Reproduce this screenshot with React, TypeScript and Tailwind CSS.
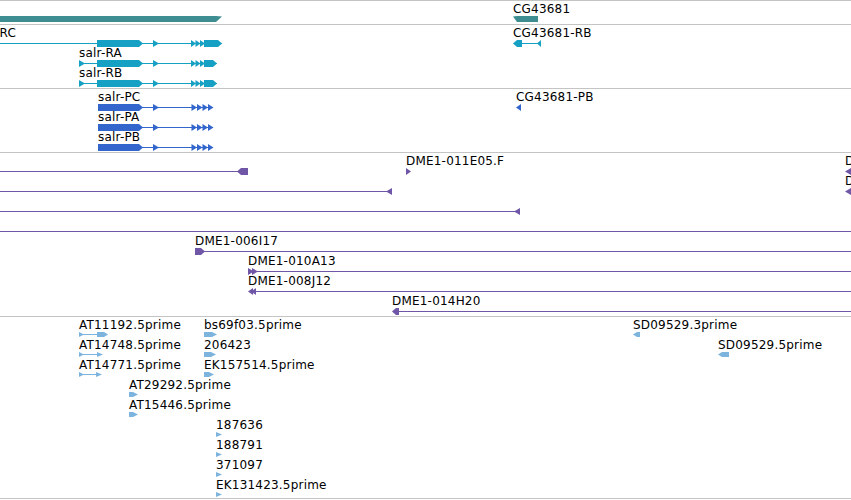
import type { ReactNode } from "react";

type Label = { x: number; y: number; text: string };

// glyph helpers, all in page coordinates (the svg viewBox is offset per track)
const line = (x1: number, x2: number, y: number) => (
  <rect x={x1} y={y} width={x2 - x1} height={1} />
);

const blockR = (x1: number, x2: number, y: number, up = 3, down = 4, tip = 4) => (
  <polygon
    points={`${x1},${y - up} ${x2 - tip},${y - up} ${x2},${y + 0.5} ${x2 - tip},${y + down} ${x1},${y + down}`}
  />
);

const blockL = (x1: number, x2: number, y: number, up = 3, down = 4, tip = 4) => (
  <polygon
    points={`${x1},${y + 0.5} ${x1 + tip},${y - up} ${x2},${y - up} ${x2},${y + down} ${x1 + tip},${y + down}`}
  />
);

const triR = (x1: number, x2: number, y: number, up = 3, down = 4) => (
  <polygon points={`${x1},${y - up} ${x2},${y + 0.5} ${x1},${y + down}`} />
);

const triL = (x1: number, x2: number, y: number, up = 3, down = 4) => (
  <polygon points={`${x2},${y - up} ${x1},${y + 0.5} ${x2},${y + down}`} />
);

const Separator = () => <div className="h-px w-full bg-[#c4c4c4]" />;

function Track({
  top,
  height,
  color,
  className,
  labels,
  children,
}: {
  top: number;
  height: number;
  color: string;
  className: string;
  labels: Label[];
  children: ReactNode;
}) {
  return (
    <div className={`relative w-full overflow-hidden ${className}`}>
      <svg
        className="absolute inset-0"
        width={851}
        height={height}
        viewBox={`0 ${top} 851 ${height}`}
        fill={color}
      >
        {children}
      </svg>
      {labels.map((l, i) => (
        <span
          key={i}
          className="absolute whitespace-nowrap text-[12px] leading-none tracking-[0.2px] text-black"
          style={{ left: l.x, top: l.y - top }}
        >
          {l.text}
        </span>
      ))}
    </div>
  );
}

// salr transcript model, cyan track
const transcript = (y: number, withFlag: boolean, end: number) => (
  <g>
    {line(withFlag ? 79 : 0, end, y)}
    {withFlag && triR(79, 85, y)}
    {blockR(97, 143, y)}
    {triR(153, 159, y)}
    {triR(191, 196, y)}
    {triR(195.5, 200.5, y)}
    {triR(200, 205, y)}
    {blockR(204, end, y)}
  </g>
);

// salr protein model, blue track
const protein = (y: number) => (
  <g>
    {line(98, 213, y)}
    {blockR(98, 143, y)}
    {triR(153, 159, y)}
    {triR(191.5, 197, y)}
    {triR(197, 202.5, y)}
    {triR(202.5, 208, y)}
    {triR(208, 213.5, y)}
  </g>
);

export default function App() {
  return (
    <div className="h-[500px] w-[851px] overflow-hidden bg-white font-['DejaVu_Sans',sans-serif]">
      <Separator />

      {/* genes */}
      <Track
        top={1}
        height={23}
        color="#3e8d91"
        className="h-[23px]"
        labels={[{ x: 513, y: 3, text: "CG43681" }]}
      >
        {blockR(0, 222, 16, 0, 6, 6)}
        {blockL(513, 538, 16, 0, 6, 4)}
      </Track>
      <Separator />

      {/* transcripts */}
      <Track
        top={25}
        height={63}
        color="#16a0c3"
        className="h-[63px]"
        labels={[
          { x: -27, y: 27, text: "salr-RC" },
          { x: 79, y: 47, text: "salr-RA" },
          { x: 79, y: 67, text: "salr-RB" },
          { x: 513, y: 27, text: "CG43681-RB" },
        ]}
      >
        {transcript(43, false, 222)}
        {transcript(63, true, 217)}
        {transcript(83, true, 217)}
        {line(520, 541, 43)}
        {blockL(513, 522, 43)}
        {triL(537, 541, 43)}
      </Track>
      <Separator />

      {/* proteins */}
      <Track
        top={89}
        height={63}
        color="#3366cc"
        className="h-[63px]"
        labels={[
          { x: 98, y: 91, text: "salr-PC" },
          { x: 98, y: 111, text: "salr-PA" },
          { x: 98, y: 131, text: "salr-PB" },
          { x: 516, y: 91, text: "CG43681-PB" },
        ]}
      >
        {protein(107)}
        {protein(127)}
        {protein(147)}
        {triL(516, 521, 107)}
      </Track>
      <Separator />

      {/* BAC ends */}
      <Track
        top={153}
        height={163}
        color="#6f56a6"
        className="h-[163px]"
        labels={[
          { x: 406, y: 155, text: "DME1-011E05.F" },
          { x: 845, y: 155, text: "DME1-013C08.R" },
          { x: 845, y: 175, text: "DME1-002B11.R" },
          { x: 195, y: 235, text: "DME1-006I17" },
          { x: 248, y: 255, text: "DME1-010A13" },
          { x: 248, y: 275, text: "DME1-008J12" },
          { x: 392, y: 295, text: "DME1-014H20" },
        ]}
      >
        {line(0, 241, 171)}
        {blockL(237, 248, 171)}
        {triR(406, 411, 171)}
        {line(0, 392, 191)}
        {triL(386, 392, 191)}
        {line(0, 520, 211)}
        {triL(514, 520, 211)}
        {triL(845, 851, 171)}
        {triL(845, 851, 191)}
        {line(0, 851, 231)}
        {line(195, 851, 251)}
        {blockR(195, 205, 251)}
        {line(248, 851, 271)}
        {triR(248, 254, 271)}
        {triR(252, 258, 271)}
        {line(250, 851, 291)}
        {triL(248, 253, 291)}
        {triL(251, 256, 291)}
        {line(395, 851, 311)}
        {blockL(392, 399, 311)}
      </Track>
      <Separator />

      {/* ESTs */}
      <Track
        top={317}
        height={181}
        color="#7db4dd"
        className="h-[181px]"
        labels={[
          { x: 79, y: 319, text: "AT11192.5prime" },
          { x: 79, y: 339, text: "AT14748.5prime" },
          { x: 79, y: 359, text: "AT14771.5prime" },
          { x: 204, y: 319, text: "bs69f03.5prime" },
          { x: 204, y: 339, text: "206423" },
          { x: 204, y: 359, text: "EK157514.5prime" },
          { x: 129, y: 379, text: "AT29292.5prime" },
          { x: 129, y: 399, text: "AT15446.5prime" },
          { x: 216, y: 419, text: "187636" },
          { x: 216, y: 439, text: "188791" },
          { x: 216, y: 459, text: "371097" },
          { x: 216, y: 479, text: "EK131423.5prime" },
          { x: 633, y: 319, text: "SD09529.3prime" },
          { x: 718, y: 339, text: "SD09529.5prime" },
        ]}
      >
        {line(79, 104, 334)}
        {triR(79, 84, 334, 2, 3)}
        {blockR(97, 108, 334, 2, 3, 4)}
        {line(79, 100, 354)}
        {triR(79, 84, 354, 2, 3)}
        {triR(97, 103, 354, 2, 3)}
        {line(79, 99, 374)}
        {triR(79, 84, 374, 2, 3)}
        {triR(96, 102, 374, 2, 3)}
        {blockR(204, 217, 334, 2, 3, 5)}
        {blockR(204, 216, 354, 2, 3, 5)}
        {blockR(204, 214, 374, 2, 3, 5)}
        {blockR(129, 138, 394, 2, 3, 5)}
        {blockR(129, 138, 414, 2, 3, 5)}
        {triR(216, 222, 434, 2, 3)}
        {triR(216, 222, 454, 2, 3)}
        {triR(216, 222, 474, 2, 3)}
        {triR(216, 222, 494, 2, 3)}
        {blockL(633, 640, 334, 2, 3, 4)}
        {blockL(718, 729, 354, 2, 3, 4)}
      </Track>
      <Separator />
    </div>
  );
}
